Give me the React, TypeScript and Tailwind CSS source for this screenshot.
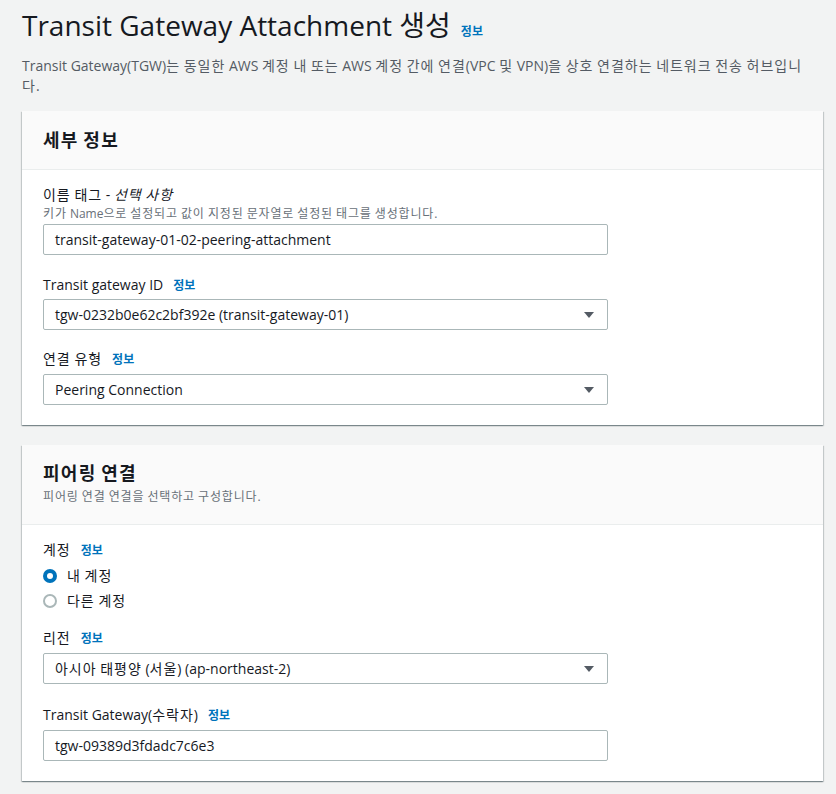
import React from 'react';

const font = { fontFamily: '"Open Sans", "Noto Sans CJK KR", sans-serif' };

// Hangul runs are a little wider in the original rendering
function K({ t }: { t: string }) {
  const parts = t.split(/([\uAC00-\uD7A3]+)/);
  return (
    <>
      {parts.map((p, i) =>
        /[\uAC00-\uD7A3]/.test(p) ? (
          <span key={i} className="tracking-[0.07em]">
            {p}
          </span>
        ) : (
          <React.Fragment key={i}>{p}</React.Fragment>
        )
      )}
    </>
  );
}

function Info() {
  return <span className="ml-[10px] text-[12px] font-bold text-[#0073bb]">정보</span>;
}

function Caret() {
  return (
    <svg width="12" height="8" viewBox="0 0 12 8" className="shrink-0">
      <path d="M1 1h10L6 7z" fill="#545b64" />
    </svg>
  );
}

function Field({ value, select }: { value: string; select?: boolean }) {
  return (
    <div className="flex h-[31px] w-[565px] items-center justify-between rounded-[2px] border border-[#aab7b8] bg-white pl-[11px] pr-[12px] text-[14px] text-[#16191f]">
      <span>
        <K t={value} />
      </span>
      {select && <Caret />}
    </div>
  );
}

function Label({ children, info }: { children: React.ReactNode; info?: boolean }) {
  return (
    <div className="flex items-baseline text-[14px] leading-[22px] text-[#16191f]">
      <span>{children}</span>
      {info && <Info />}
    </div>
  );
}

function Radio({ checked, label }: { checked?: boolean; label: string }) {
  return (
    <div className="flex h-[25px] items-center gap-[10px] text-[14px] text-[#16191f]">
      {checked ? (
        <span className="flex h-[14px] w-[14px] items-center justify-center rounded-full bg-[#0073bb]">
          <span className="h-[6px] w-[6px] rounded-full bg-white" />
        </span>
      ) : (
        <span className="h-[14px] w-[14px] rounded-full border-2 border-[#aab7b8] bg-white" />
      )}
      <span>
        <K t={label} />
      </span>
    </div>
  );
}

function Card({ title, desc, children }: { title: string; desc?: string; children: React.ReactNode }) {
  return (
    <div className="w-[801px] bg-white shadow-[0_1px_1px_0_rgba(0,28,36,0.3),1px_1px_1px_0_rgba(0,28,36,0.15),-1px_1px_1px_0_rgba(0,28,36,0.15)]">
      <div className={`border-b border-[#eaeded] bg-[#fafafa] px-[21px] ${desc ? 'pt-[14px] pb-[19px]' : 'py-[15px]'}`}>
        <h2 className="text-[18px] font-bold leading-[28px] text-[#16191f]">
          <K t={title} />
        </h2>
        {desc && (
          <p className="mt-[2px] text-[12px] leading-[16px] text-[#687078]">
            <K t={desc} />
          </p>
        )}
      </div>
      <div className="px-[21px] pt-[14px] pb-[20px]">{children}</div>
    </div>
  );
}

export default function App() {
  return (
    <div className="min-h-screen bg-[#f2f3f3] pl-[22px] pt-[5px] pb-[14px]" style={font}>
      <div className="flex items-baseline">
        <h1 className="text-[28px] leading-[40px] text-[#16191f]">Transit Gateway Attachment 생성</h1>
        <Info />
      </div>
      <p className="mt-[11px] w-[796px] text-[14px] leading-[20px] text-[#545b64]">
        <K t="Transit Gateway(TGW)는 동일한 AWS 계정 내 또는 AWS 계정 간에 연결(VPC 및 VPN)을 상호 연결하는 네트워크 전송 허브입니다." />
      </p>

      <div className="mt-[15px]">
        <Card title="세부 정보">
          <Label>
            <K t="이름 태그 - " />
            <i>
              <K t="선택 사항" />
            </i>
          </Label>
          <p className="text-[12px] leading-[16px] text-[#687078]">
            <K t="키가 Name으로 설정되고 값이 지정된 문자열로 설정된 태그를 생성합니다." />
          </p>
          <div className="mt-[2px]">
            <Field value="transit-gateway-01-02-peering-attachment" />
          </div>
          <div className="mt-[19px]">
            <Label info>Transit gateway ID</Label>
          </div>
          <div className="mt-[2px]">
            <Field value="tgw-0232b0e62c2bf392e (transit-gateway-01)" select />
          </div>
          <div className="mt-[18px]">
            <Label info>
              <K t="연결 유형" />
            </Label>
          </div>
          <div className="mt-[3px]">
            <Field value="Peering Connection" select />
          </div>
        </Card>
      </div>

      <div className="mt-[20px]">
        <Card title="피어링 연결" desc="피어링 연결 연결을 선택하고 구성합니다.">
          <Label info>
            <K t="계정" />
          </Label>
          <div className="mt-[1px]">
            <Radio checked label="내 계정" />
            <Radio label="다른 계정" />
          </div>
          <div className="mt-[14px]">
            <Label info>
              <K t="리전" />
            </Label>
          </div>
          <div className="mt-[3px]">
            <Field value="아시아 태평양 (서울) (ap-northeast-2)" select />
          </div>
          <div className="mt-[20px]">
            <Label info>
              Transit Gateway(<K t="수락자" />)
            </Label>
          </div>
          <div className="mt-[3px]">
            <Field value="tgw-09389d3fdadc7c6e3" />
          </div>
        </Card>
      </div>
    </div>
  );
}
